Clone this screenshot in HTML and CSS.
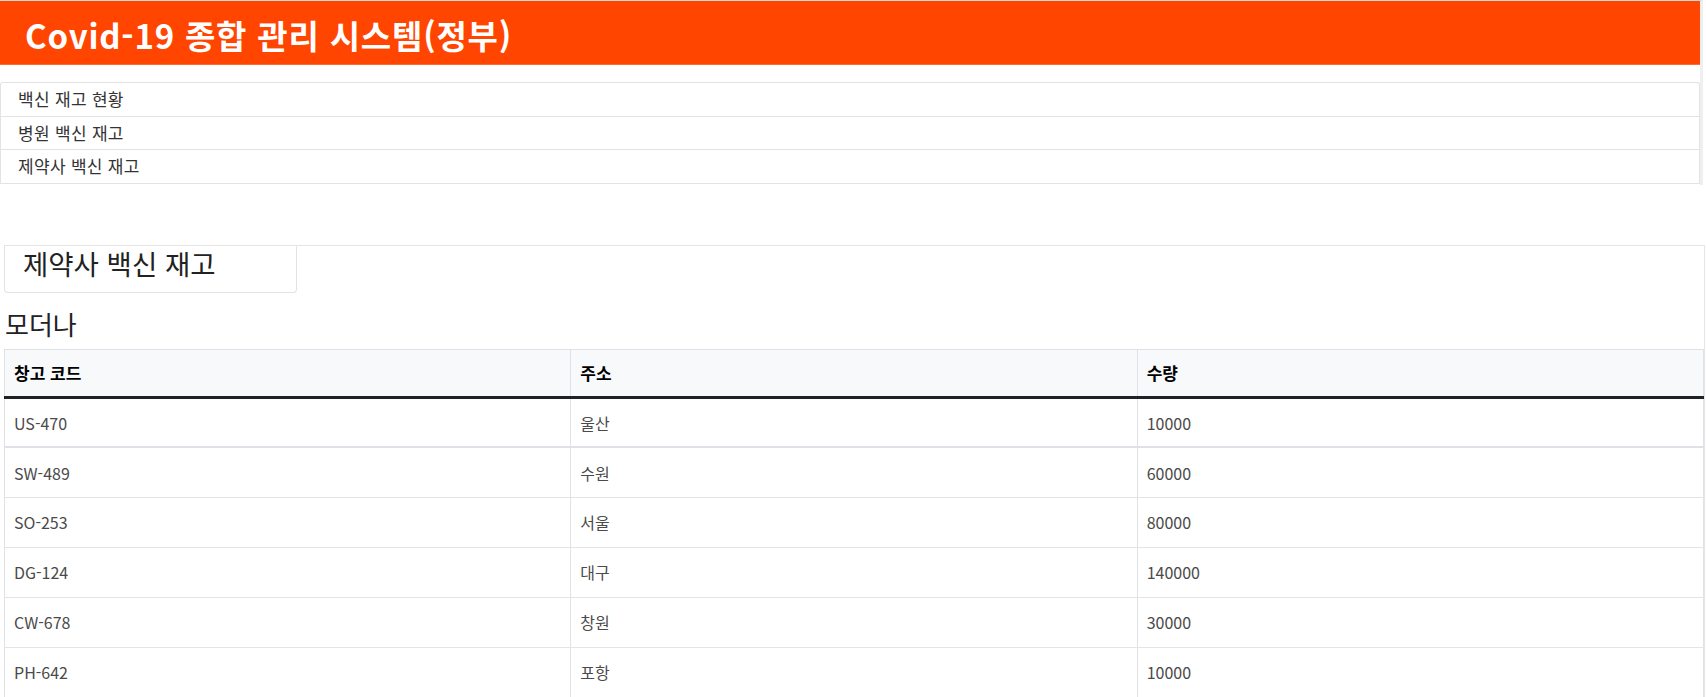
FILE: index.html
```html
<!DOCTYPE html>
<html lang="ko">
<head>
<meta charset="utf-8">
<title>Covid-19 종합 관리 시스템(정부)</title>
<link rel="stylesheet" href="styles.css">
</head>
<body>
<div class="top">
  <header class="banner"><h1 class="banner-title">Covid-19 종합 관리 시스템(정부)</h1></header>
  <ul class="menu">
    <li class="menu-item">백신 재고 현황</li>
    <li class="menu-item">병원 백신 재고</li>
    <li class="menu-item">제약사 백신 재고</li>
  </ul>
</div>
<main class="panel">
  <div class="card-title">제약사 백신 재고</div>
  <h2 class="maker">모더나</h2>
  <table class="stock">
    <thead>
      <tr><th>창고 코드</th><th>주소</th><th>수량</th></tr>
    </thead>
    <tbody>
      <tr><td>US-470</td><td>울산</td><td>10000</td></tr>
      <tr><td>SW-489</td><td>수원</td><td>60000</td></tr>
      <tr><td>SO-253</td><td>서울</td><td>80000</td></tr>
      <tr><td>DG-124</td><td>대구</td><td>140000</td></tr>
      <tr><td>CW-678</td><td>창원</td><td>30000</td></tr>
      <tr><td>PH-642</td><td>포항</td><td>10000</td></tr>
    </tbody>
  </table>
</main>
</body>
</html>
```
FILE: styles.css
```css
* { box-sizing: border-box; }
html, body { margin: 0; padding: 0; background: #fff; }
body {
  font-family: "Noto Sans CJK KR", "Noto Sans", sans-serif;
  color: #212529;
  font-size: 16px;
}
.top {
  width: 1703px;
  border-top: 1px solid #d9d9d9;
  border-right: 3px solid #efefef;
  padding-bottom: 1px;
}
.banner {
  height: 64px;
  background: #ff4500;
  border-bottom: 1px solid #ff6a3a;
  display: flex;
  align-items: center;
  padding-left: 25px;
}
.banner-title {
  margin: 0;
  color: #fff;
  font-size: 33px;
  font-weight: 700;
  line-height: 40px;
  letter-spacing: 0.8px;
  padding-top: 4px;
}
.menu {
  list-style: none;
  margin: 17px 0 0 0;
  padding: 0;
  width: 1700px;
  border: 1px solid #e3e3e3;
  border-bottom: 0;
  border-radius: 3px 3px 0 0;
}
.menu-item {
  height: 33.6px;
  line-height: 32px;
  padding-left: 17px;
  border-bottom: 1px solid #e3e3e3;
  color: #333;
  font-size: 17px;
  letter-spacing: 0.3px;
}
.panel {
  margin: 60px 0 0 4px;
  width: 1701px;
  border-top: 1px solid #e5e5e5;
  border-right: 1px solid #e5e5e5;
}
.card-title {
  width: 293px;
  height: 47px;
  border: 1px solid #e3e3e3;
  border-top: 0;
  border-radius: 0 0 4px 4px;
  padding-left: 18px;
  font-size: 27.5px;
  line-height: 34px;
  color: #222;
}
.maker {
  margin: 13px 0 7px 1px;
  font-size: 26px;
  font-weight: 400;
  line-height: 36px;
  color: #222;
}
.stock {
  width: 1700px;
  border-collapse: collapse;
  table-layout: fixed;
  border: 1px solid #dee2e6;
}
.stock th, .stock td {
  text-align: left;
  padding: 0 8px 0 9px;
  border-left: 1px solid #dee2e6;
  font-size: 16px;
}
.stock th {
  height: 48px;
  background: #f8f9fa;
  font-weight: 700;
  font-size: 17px;
  color: #000;
  border-bottom: 3px solid #1f2226;
}
.stock td {
  height: 50px;
  border-bottom: 1px solid #e2e5e8;
  color: #4a4a4a;
}
.stock tbody tr:first-child td {
  border-bottom: 2px solid #dee2e6;
}
```
